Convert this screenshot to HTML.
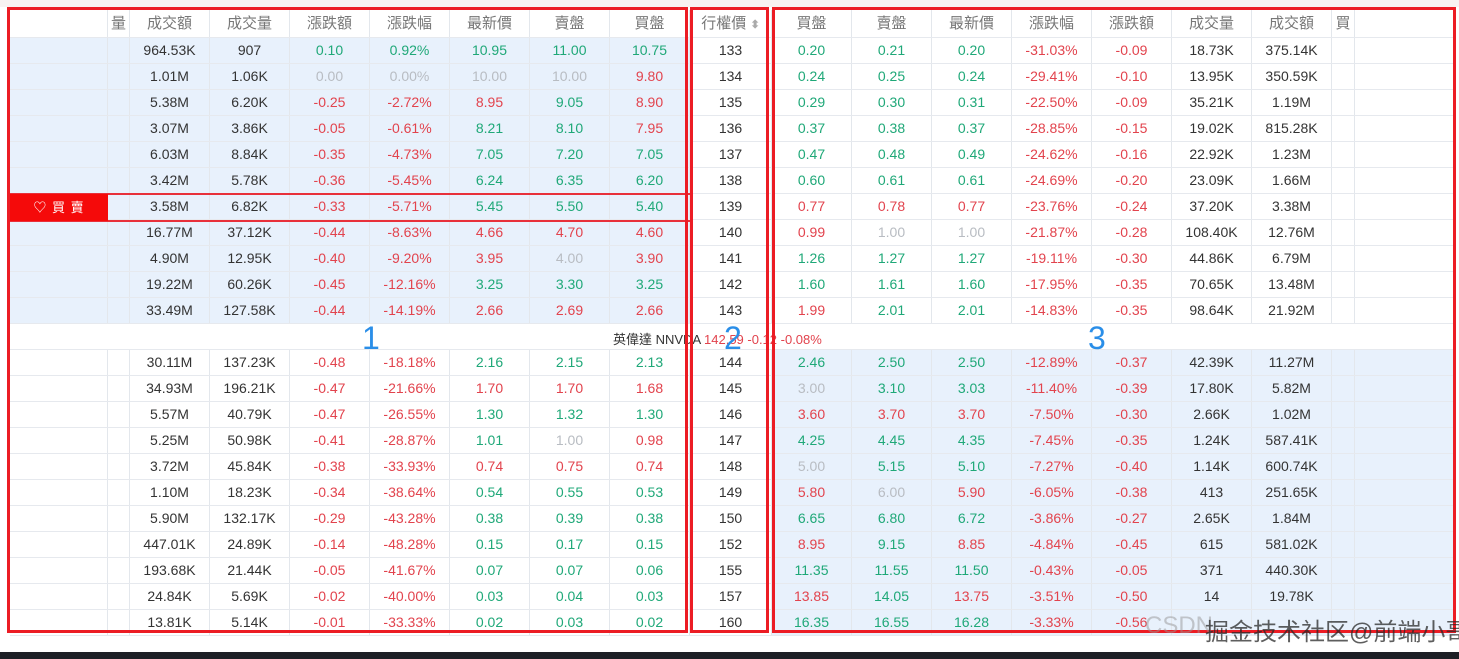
<!DOCTYPE html>
<html><head><meta charset="utf-8"><style>
*{box-sizing:border-box;margin:0;padding:0}
body{width:1459px;height:659px;background:#fff;position:relative;overflow:hidden;font-family:"Liberation Sans","Noto Sans CJK TC",sans-serif;font-size:14px;color:#333}
.top{position:absolute;left:0;top:0;width:1459px;height:7px;background:#f8f2f1}
.bar{position:absolute;left:0;top:652px;width:1459px;height:7px;background:#1d1f25}
.row{position:absolute;left:10px;height:26px;display:flex;border-bottom:1px solid #e6e9ee}
.row span{height:25px;line-height:25px;text-align:center;border-right:1px solid #e3e7ec;white-space:nowrap;overflow:hidden}
.row span:nth-child(1){width:98px}
.row span:nth-child(2){width:22px}
.row span:nth-child(n+3){width:80px}
.row span:nth-child(10){width:82px}
.row span:nth-child(18){width:23px}
.row span:nth-child(19){width:100px;border-right:none}
.hd span{color:#777;font-size:15px}
.t span:nth-child(-n+9){background:#e8f1fc}
.b span:nth-child(n+11){background:#e8f1fc}
.g{color:#1fa878}.r{color:#e2434d}.x{color:#b8bcc2}
.mid{position:absolute;left:10px;top:324px;width:1445px;height:26px;border-bottom:1px solid #e6e9ee}
.mid div{position:absolute;left:603px;top:5px;font-size:13px}
.box{position:absolute;border:3px solid #ec1c24;top:7px;height:626px}
.n{position:absolute;color:#2a8ee8;font-size:32px;top:320px}
.buy{position:absolute;left:10px;top:194px;width:98px;height:27px;background:#f50a0a;color:#fff;line-height:27px;text-align:center;font-size:13px;letter-spacing:1px}
.hl{position:absolute;left:10px;width:680px;height:2px;background:#e8303a}
.wm{position:absolute;top:612px;font-size:24px;white-space:nowrap;overflow:hidden}
</style></head><body>
<div class="top"></div>
<div class="row hd" style="top:10px;height:28px"><span style="height:27px;line-height:27px"></span><span style="height:27px;line-height:27px">量</span><span style="height:27px;line-height:27px">成交額</span><span style="height:27px;line-height:27px">成交量</span><span style="height:27px;line-height:27px">漲跌額</span><span style="height:27px;line-height:27px">漲跌幅</span><span style="height:27px;line-height:27px">最新價</span><span style="height:27px;line-height:27px">賣盤</span><span style="height:27px;line-height:27px">買盤</span><span style="height:27px;line-height:27px">行權價 <b style="color:#aaa;font-size:11px">⬍</b></span><span style="height:27px;line-height:27px">買盤</span><span style="height:27px;line-height:27px">賣盤</span><span style="height:27px;line-height:27px">最新價</span><span style="height:27px;line-height:27px">漲跌幅</span><span style="height:27px;line-height:27px">漲跌額</span><span style="height:27px;line-height:27px">成交量</span><span style="height:27px;line-height:27px">成交額</span><span style="height:27px;line-height:27px">買</span><span style="height:27px"></span></div>

<div class="row t" style="top:38px"><span></span><span></span><span>964.53K</span><span>907</span><span class="g">0.10</span><span class="g">0.92%</span><span class="g">10.95</span><span class="g">11.00</span><span class="g">10.75</span><span>133</span><span class="g">0.20</span><span class="g">0.21</span><span class="g">0.20</span><span class="r">-31.03%</span><span class="r">-0.09</span><span>18.73K</span><span>375.14K</span><span></span><span></span></div>
<div class="row t" style="top:64px"><span></span><span></span><span>1.01M</span><span>1.06K</span><span class="x">0.00</span><span class="x">0.00%</span><span class="x">10.00</span><span class="x">10.00</span><span class="r">9.80</span><span>134</span><span class="g">0.24</span><span class="g">0.25</span><span class="g">0.24</span><span class="r">-29.41%</span><span class="r">-0.10</span><span>13.95K</span><span>350.59K</span><span></span><span></span></div>
<div class="row t" style="top:90px"><span></span><span></span><span>5.38M</span><span>6.20K</span><span class="r">-0.25</span><span class="r">-2.72%</span><span class="r">8.95</span><span class="g">9.05</span><span class="r">8.90</span><span>135</span><span class="g">0.29</span><span class="g">0.30</span><span class="g">0.31</span><span class="r">-22.50%</span><span class="r">-0.09</span><span>35.21K</span><span>1.19M</span><span></span><span></span></div>
<div class="row t" style="top:116px"><span></span><span></span><span>3.07M</span><span>3.86K</span><span class="r">-0.05</span><span class="r">-0.61%</span><span class="g">8.21</span><span class="g">8.10</span><span class="r">7.95</span><span>136</span><span class="g">0.37</span><span class="g">0.38</span><span class="g">0.37</span><span class="r">-28.85%</span><span class="r">-0.15</span><span>19.02K</span><span>815.28K</span><span></span><span></span></div>
<div class="row t" style="top:142px"><span></span><span></span><span>6.03M</span><span>8.84K</span><span class="r">-0.35</span><span class="r">-4.73%</span><span class="g">7.05</span><span class="g">7.20</span><span class="g">7.05</span><span>137</span><span class="g">0.47</span><span class="g">0.48</span><span class="g">0.49</span><span class="r">-24.62%</span><span class="r">-0.16</span><span>22.92K</span><span>1.23M</span><span></span><span></span></div>
<div class="row t" style="top:168px"><span></span><span></span><span>3.42M</span><span>5.78K</span><span class="r">-0.36</span><span class="r">-5.45%</span><span class="g">6.24</span><span class="g">6.35</span><span class="g">6.20</span><span>138</span><span class="g">0.60</span><span class="g">0.61</span><span class="g">0.61</span><span class="r">-24.69%</span><span class="r">-0.20</span><span>23.09K</span><span>1.66M</span><span></span><span></span></div>
<div class="row t" style="top:194px"><span></span><span></span><span>3.58M</span><span>6.82K</span><span class="r">-0.33</span><span class="r">-5.71%</span><span class="g">5.45</span><span class="g">5.50</span><span class="g">5.40</span><span>139</span><span class="r">0.77</span><span class="r">0.78</span><span class="r">0.77</span><span class="r">-23.76%</span><span class="r">-0.24</span><span>37.20K</span><span>3.38M</span><span></span><span></span></div>
<div class="row t" style="top:220px"><span></span><span></span><span>16.77M</span><span>37.12K</span><span class="r">-0.44</span><span class="r">-8.63%</span><span class="r">4.66</span><span class="r">4.70</span><span class="r">4.60</span><span>140</span><span class="r">0.99</span><span class="x">1.00</span><span class="x">1.00</span><span class="r">-21.87%</span><span class="r">-0.28</span><span>108.40K</span><span>12.76M</span><span></span><span></span></div>
<div class="row t" style="top:246px"><span></span><span></span><span>4.90M</span><span>12.95K</span><span class="r">-0.40</span><span class="r">-9.20%</span><span class="r">3.95</span><span class="x">4.00</span><span class="r">3.90</span><span>141</span><span class="g">1.26</span><span class="g">1.27</span><span class="g">1.27</span><span class="r">-19.11%</span><span class="r">-0.30</span><span>44.86K</span><span>6.79M</span><span></span><span></span></div>
<div class="row t" style="top:272px"><span></span><span></span><span>19.22M</span><span>60.26K</span><span class="r">-0.45</span><span class="r">-12.16%</span><span class="g">3.25</span><span class="g">3.30</span><span class="g">3.25</span><span>142</span><span class="g">1.60</span><span class="g">1.61</span><span class="g">1.60</span><span class="r">-17.95%</span><span class="r">-0.35</span><span>70.65K</span><span>13.48M</span><span></span><span></span></div>
<div class="row t" style="top:298px"><span></span><span></span><span>33.49M</span><span>127.58K</span><span class="r">-0.44</span><span class="r">-14.19%</span><span class="r">2.66</span><span class="r">2.69</span><span class="r">2.66</span><span>143</span><span class="r">1.99</span><span class="g">2.01</span><span class="g">2.01</span><span class="r">-14.83%</span><span class="r">-0.35</span><span>98.64K</span><span>21.92M</span><span></span><span></span></div>

<div class="mid"><div>英偉達 NNVDA <span class="r">142.59 -0.12 -0.08%</span></div></div>

<div class="row b" style="top:350px"><span></span><span></span><span>30.11M</span><span>137.23K</span><span class="r">-0.48</span><span class="r">-18.18%</span><span class="g">2.16</span><span class="g">2.15</span><span class="g">2.13</span><span>144</span><span class="g">2.46</span><span class="g">2.50</span><span class="g">2.50</span><span class="r">-12.89%</span><span class="r">-0.37</span><span>42.39K</span><span>11.27M</span><span></span><span></span></div>
<div class="row b" style="top:376px"><span></span><span></span><span>34.93M</span><span>196.21K</span><span class="r">-0.47</span><span class="r">-21.66%</span><span class="r">1.70</span><span class="r">1.70</span><span class="r">1.68</span><span>145</span><span class="x">3.00</span><span class="g">3.10</span><span class="g">3.03</span><span class="r">-11.40%</span><span class="r">-0.39</span><span>17.80K</span><span>5.82M</span><span></span><span></span></div>
<div class="row b" style="top:402px"><span></span><span></span><span>5.57M</span><span>40.79K</span><span class="r">-0.47</span><span class="r">-26.55%</span><span class="g">1.30</span><span class="g">1.32</span><span class="g">1.30</span><span>146</span><span class="r">3.60</span><span class="r">3.70</span><span class="r">3.70</span><span class="r">-7.50%</span><span class="r">-0.30</span><span>2.66K</span><span>1.02M</span><span></span><span></span></div>
<div class="row b" style="top:428px"><span></span><span></span><span>5.25M</span><span>50.98K</span><span class="r">-0.41</span><span class="r">-28.87%</span><span class="g">1.01</span><span class="x">1.00</span><span class="r">0.98</span><span>147</span><span class="g">4.25</span><span class="g">4.45</span><span class="g">4.35</span><span class="r">-7.45%</span><span class="r">-0.35</span><span>1.24K</span><span>587.41K</span><span></span><span></span></div>
<div class="row b" style="top:454px"><span></span><span></span><span>3.72M</span><span>45.84K</span><span class="r">-0.38</span><span class="r">-33.93%</span><span class="r">0.74</span><span class="r">0.75</span><span class="r">0.74</span><span>148</span><span class="x">5.00</span><span class="g">5.15</span><span class="g">5.10</span><span class="r">-7.27%</span><span class="r">-0.40</span><span>1.14K</span><span>600.74K</span><span></span><span></span></div>
<div class="row b" style="top:480px"><span></span><span></span><span>1.10M</span><span>18.23K</span><span class="r">-0.34</span><span class="r">-38.64%</span><span class="g">0.54</span><span class="g">0.55</span><span class="g">0.53</span><span>149</span><span class="r">5.80</span><span class="x">6.00</span><span class="r">5.90</span><span class="r">-6.05%</span><span class="r">-0.38</span><span>413</span><span>251.65K</span><span></span><span></span></div>
<div class="row b" style="top:506px"><span></span><span></span><span>5.90M</span><span>132.17K</span><span class="r">-0.29</span><span class="r">-43.28%</span><span class="g">0.38</span><span class="g">0.39</span><span class="g">0.38</span><span>150</span><span class="g">6.65</span><span class="g">6.80</span><span class="g">6.72</span><span class="r">-3.86%</span><span class="r">-0.27</span><span>2.65K</span><span>1.84M</span><span></span><span></span></div>
<div class="row b" style="top:532px"><span></span><span></span><span>447.01K</span><span>24.89K</span><span class="r">-0.14</span><span class="r">-48.28%</span><span class="g">0.15</span><span class="g">0.17</span><span class="g">0.15</span><span>152</span><span class="r">8.95</span><span class="g">9.15</span><span class="r">8.85</span><span class="r">-4.84%</span><span class="r">-0.45</span><span>615</span><span>581.02K</span><span></span><span></span></div>
<div class="row b" style="top:558px"><span></span><span></span><span>193.68K</span><span>21.44K</span><span class="r">-0.05</span><span class="r">-41.67%</span><span class="g">0.07</span><span class="g">0.07</span><span class="g">0.06</span><span>155</span><span class="g">11.35</span><span class="g">11.55</span><span class="g">11.50</span><span class="r">-0.43%</span><span class="r">-0.05</span><span>371</span><span>440.30K</span><span></span><span></span></div>
<div class="row b" style="top:584px"><span></span><span></span><span>24.84K</span><span>5.69K</span><span class="r">-0.02</span><span class="r">-40.00%</span><span class="g">0.03</span><span class="g">0.04</span><span class="g">0.03</span><span>157</span><span class="r">13.85</span><span class="g">14.05</span><span class="r">13.75</span><span class="r">-3.51%</span><span class="r">-0.50</span><span>14</span><span>19.78K</span><span></span><span></span></div>
<div class="row b" style="top:610px"><span></span><span></span><span>13.81K</span><span>5.14K</span><span class="r">-0.01</span><span class="r">-33.33%</span><span class="g">0.02</span><span class="g">0.03</span><span class="g">0.02</span><span>160</span><span class="g">16.35</span><span class="g">16.55</span><span class="g">16.28</span><span class="r">-3.33%</span><span class="r">-0.56</span><span></span><span></span><span></span><span></span></div>

<div class="hl" style="top:193px"></div><div class="hl" style="top:220px"></div>
<div class="buy">♡ 買 賣</div>

<div class="box" style="left:7px;width:681px"></div>
<div class="box" style="left:690px;width:79px"></div>
<div class="box" style="left:772px;width:684px"></div>
<div class="n" style="left:362px">1</div>
<div class="n" style="left:724px">2</div>
<div class="n" style="left:1088px">3</div>
<div class="wm" style="left:1145px;width:80px;color:rgba(150,150,150,.5)">CSDN</div>
<div class="wm" style="left:1205px;width:254px;color:rgba(40,40,40,.75)">掘金技术社区@前端小哥</div>
<div class="bar"></div>
</body></html>
